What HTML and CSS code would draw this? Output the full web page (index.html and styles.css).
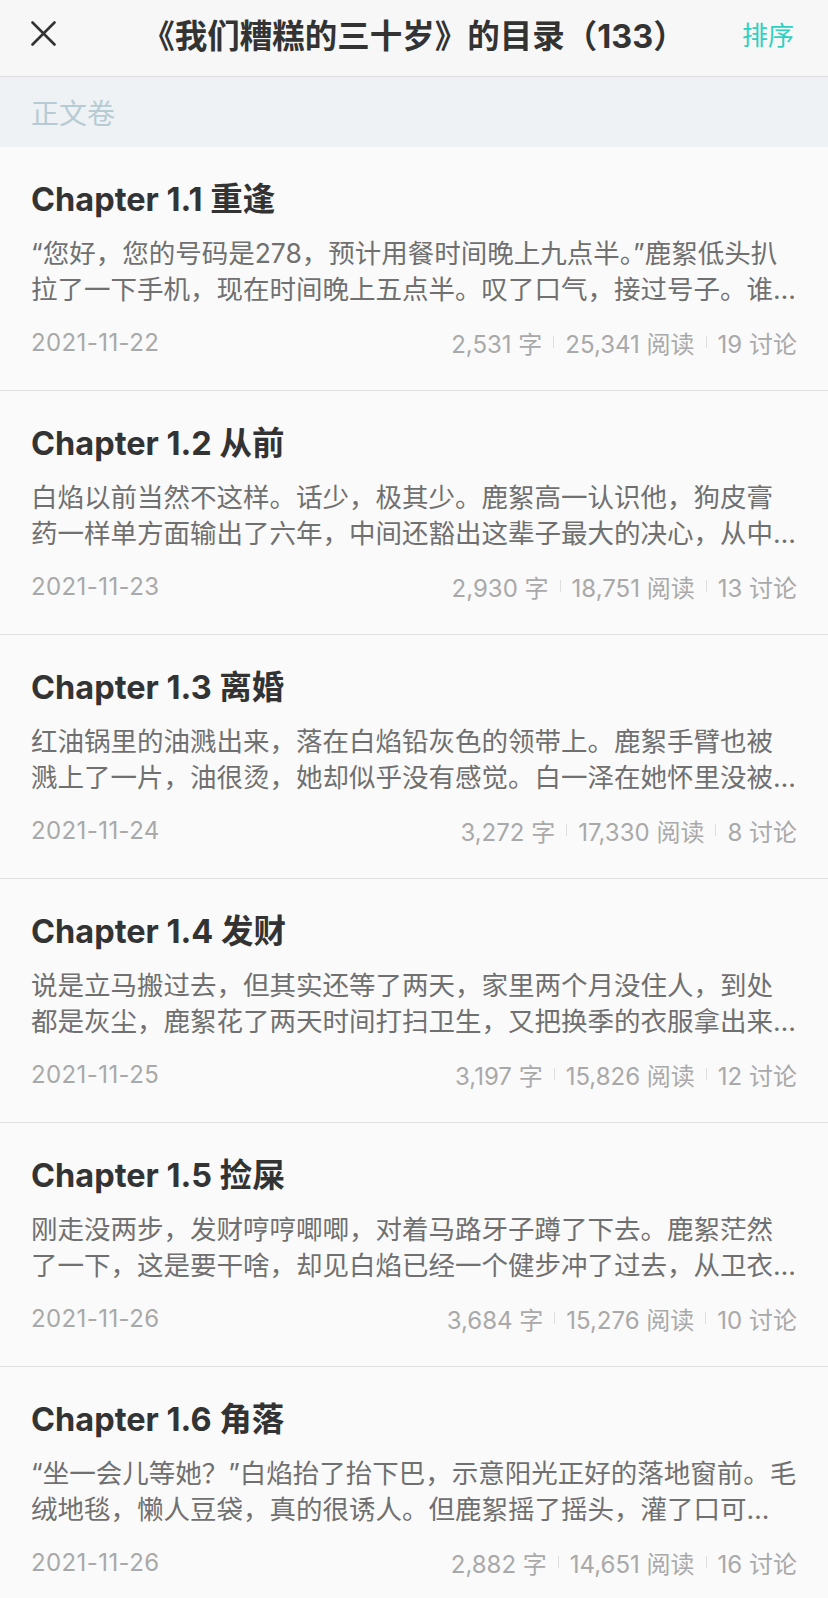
FILE: index.html
```html
<!DOCTYPE html>
<html>
<head>
    <meta charset="utf-8">
    <title>目录</title>
    <link rel="stylesheet" href="styles.css">
</head>
<body>
    <div class="sheet">
        <div class="top-bar">
            <span class="close">
                <svg width="25" height="25" viewBox="0 0 25 25">
                    <path d="M1.5 1.5 L23.5 23.5 M23.5 1.5 L1.5 23.5" stroke="#333" stroke-width="2.6" stroke-linecap="round" fill="none"/>
                </svg>
            </span>
            <h1 class="book-title">《我们糟糕的三十岁》的目录（133）</h1>
            <span class="sort">排序</span>
        </div>

        <div class="volume">正文卷</div>

        <div class="chapter-list">
            <div class="chapter">
                <div class="chapter-title">Chapter 1.1 重逢</div>
                <div class="excerpt">“您好，您的号码是278，预计用餐时间晚上九点半。”鹿絮低头扒拉了一下手机，现在时间晚上五点半。叹了口气，接过号子。谁…</div>
                <div class="meta">
                    <span class="date">2021-11-22</span>
                    <span class="stats"><span>2,531 字</span><i class="sep"></i><span>25,341 阅读</span><i class="sep"></i><span>19 讨论</span></span>
                </div>
            </div>
            <div class="chapter">
                <div class="chapter-title">Chapter 1.2 从前</div>
                <div class="excerpt">白焰以前当然不这样。话少，极其少。鹿絮高一认识他，狗皮膏药一样单方面输出了六年，中间还豁出这辈子最大的决心，从中…</div>
                <div class="meta">
                    <span class="date">2021-11-23</span>
                    <span class="stats"><span>2,930 字</span><i class="sep"></i><span>18,751 阅读</span><i class="sep"></i><span>13 讨论</span></span>
                </div>
            </div>
            <div class="chapter">
                <div class="chapter-title">Chapter 1.3 离婚</div>
                <div class="excerpt">红油锅里的油溅出来，落在白焰铅灰色的领带上。鹿絮手臂也被溅上了一片，油很烫，她却似乎没有感觉。白一泽在她怀里没被…</div>
                <div class="meta">
                    <span class="date">2021-11-24</span>
                    <span class="stats"><span>3,272 字</span><i class="sep"></i><span>17,330 阅读</span><i class="sep"></i><span>8 讨论</span></span>
                </div>
            </div>
            <div class="chapter">
                <div class="chapter-title">Chapter 1.4 发财</div>
                <div class="excerpt">说是立马搬过去，但其实还等了两天，家里两个月没住人，到处都是灰尘，鹿絮花了两天时间打扫卫生，又把换季的衣服拿出来…</div>
                <div class="meta">
                    <span class="date">2021-11-25</span>
                    <span class="stats"><span>3,197 字</span><i class="sep"></i><span>15,826 阅读</span><i class="sep"></i><span>12 讨论</span></span>
                </div>
            </div>
            <div class="chapter">
                <div class="chapter-title">Chapter 1.5 捡屎</div>
                <div class="excerpt">刚走没两步，发财哼哼唧唧，对着马路牙子蹲了下去。鹿絮茫然了一下，这是要干啥，却见白焰已经一个健步冲了过去，从卫衣…</div>
                <div class="meta">
                    <span class="date">2021-11-26</span>
                    <span class="stats"><span>3,684 字</span><i class="sep"></i><span>15,276 阅读</span><i class="sep"></i><span>10 讨论</span></span>
                </div>
            </div>
            <div class="chapter">
                <div class="chapter-title">Chapter 1.6 角落</div>
                <div class="excerpt">“坐一会儿等她？”白焰抬了抬下巴，示意阳光正好的落地窗前。毛绒地毯，懒人豆袋，真的很诱人。但鹿絮摇了摇头，灌了口可…</div>
                <div class="meta">
                    <span class="date">2021-11-26</span>
                    <span class="stats"><span>2,882 字</span><i class="sep"></i><span>14,651 阅读</span><i class="sep"></i><span>16 讨论</span></span>
                </div>
            </div>
        </div>
    </div>
</body>
</html>
```

FILE: styles.css
```css
body {
    margin: 0;
    background: #fafafa;
    font-family: Inter, "Noto Sans CJK SC", sans-serif;
    color: #333;
}

.sheet {
    background: #fafafa;
}

.top-bar {
    height: 77px;
    box-sizing: border-box;
    padding: 0 34px 9px 31px;
    display: grid;
    grid-template-columns: 100px 1fr 100px;
    align-items: center;
    background: #f7f7f7;
    border-bottom: 1px solid #dcdcdc;
}

.close {
    display: flex;
}

.book-title {
    margin: 0 -3px 0 0;
    font-size: 32.5px;
    font-weight: 700;
    text-align: center;
    white-space: nowrap;
    color: #333;
}

.sort {
    justify-self: end;
    font-size: 26px;
    color: #2fd0c0;
}

.volume {
    height: 70px;
    line-height: 74px;
    box-sizing: border-box;
    padding-left: 31px;
    background: #eef2f4;
    font-size: 28px;
    color: #b6cbd3;
}

.chapter {
    padding: 31px 31px 31px;
    border-bottom: 1px solid #e2e2e2;
}

.chapter-title {
    font-size: 32.5px;
    line-height: 44px;
    font-weight: 700;
    color: #333;
}

.excerpt {
    margin-top: 13px;
    font-size: 26.5px;
    line-height: 36px;
    width: 28.95em;
    max-height: 72px;
    overflow: hidden;
    color: #707070;
}

.meta {
    margin-top: 18px;
    height: 34px;
    display: flex;
    justify-content: space-between;
    align-items: center;
    font-size: 24px;
    color: #a9a9a9;
}

.date {
    letter-spacing: 0.4px;
}

.stats {
    display: flex;
    align-items: center;
}

.sep {
    width: 1px;
    height: 12px;
    margin: 0 11px;
    background: #dedede;
}
```
